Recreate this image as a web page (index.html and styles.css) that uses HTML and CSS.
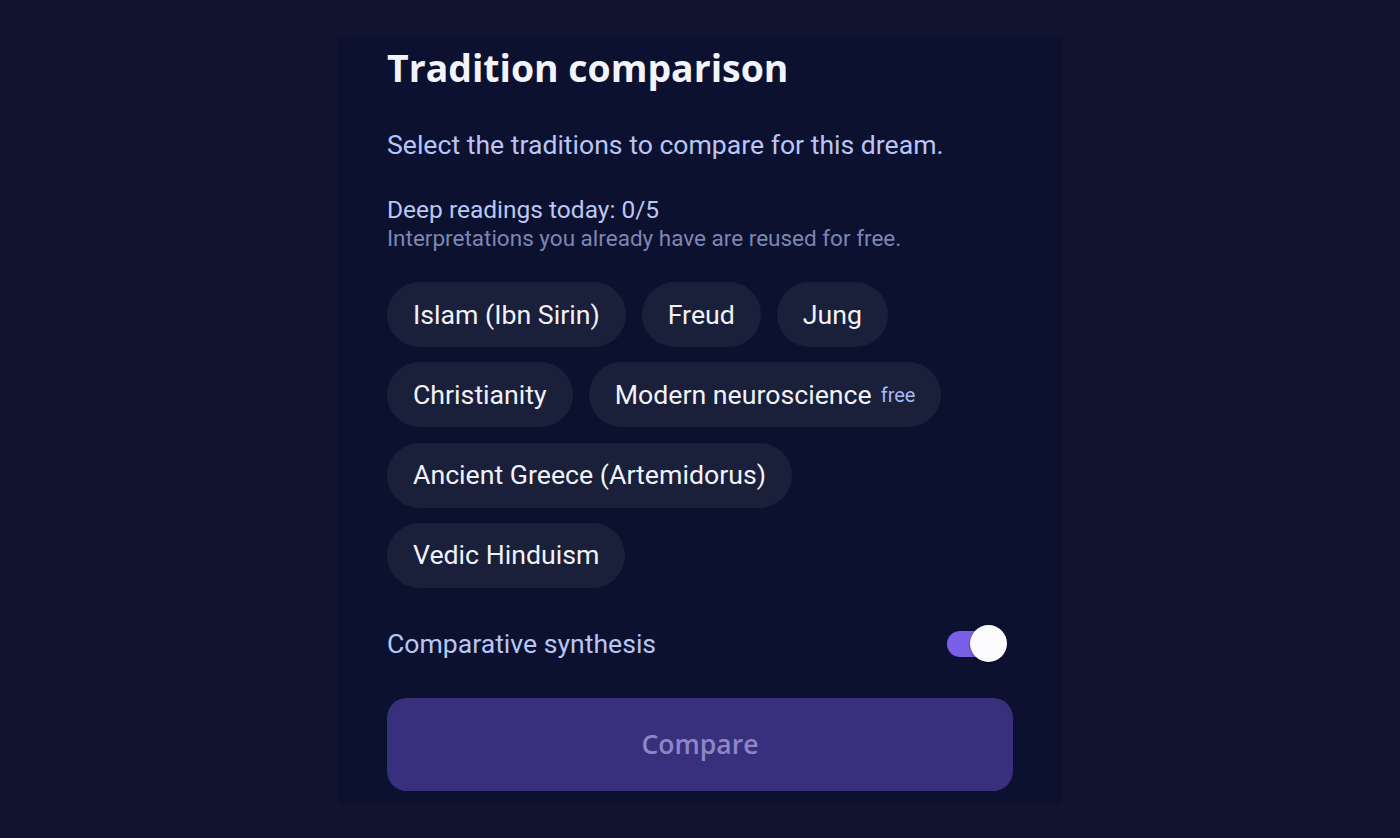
FILE: index.html
```html
<!DOCTYPE html>
<html lang="en">
<head>
<meta charset="utf-8">
<title>Tradition comparison</title>
<link rel="stylesheet" href="styles.css">
</head>
<body>
<main class="page">
  <section class="panel">
    <h1 class="title">Tradition comparison</h1>
    <p class="lead">Select the traditions to compare for this dream.</p>
    <div class="quota">
      <div class="quota-main">Deep readings today: 0/5</div>
      <div class="quota-note">Interpretations you already have are reused for free.</div>
    </div>
    <div class="chips">
      <button class="chip">Islam (Ibn Sirin)</button>
      <button class="chip">Freud</button>
      <button class="chip">Jung</button>
      <button class="chip">Christianity</button>
      <button class="chip">Modern neuroscience <span class="tag">free</span></button>
      <button class="chip">Ancient Greece (Artemidorus)</button>
      <button class="chip">Vedic Hinduism</button>
    </div>
    <div class="synth">
      <span class="synth-label">Comparative synthesis</span>
      <span class="toggle"><span class="knob"></span></span>
    </div>
    <button class="cta">Compare</button>
  </section>
</main>
</body>
</html>
```
FILE: styles.css
```css
html, body {
  margin: 0;
  padding: 0;
  background: #11132f;
  height: 100%;
}
body {
  font-family: Roboto, "Liberation Sans", sans-serif;
  overflow: hidden;
}
.page {
  display: flex;
  justify-content: center;
  padding-top: 36px;
}
.panel {
  width: 626px;
  padding: 0 49px 14px 49px;
  background: #0c1130;
  display: flex;
  flex-direction: column;
}
.title {
  margin: 8px 0 0 0;
  font-family: "Open Sans", sans-serif;
  font-weight: 700;
  font-size: 37.4px;
  line-height: 48px;
  color: #f2f3fb;
  letter-spacing: 0;
}
.lead {
  margin: 36px 0 0 0;
  font-size: 26.6px;
  line-height: 34px;
  color: #b9c5f4;
}
.quota {
  margin-top: 33px;
  display: flex;
  flex-direction: column;
}
.quota-main {
  font-size: 24.5px;
  line-height: 29px;
  color: #bcc7f3;
}
.quota-note {
  font-size: 22.5px;
  line-height: 28px;
  color: #7e86b3;
}
.chips {
  margin-top: 30px;
  display: flex;
  flex-wrap: wrap;
  gap: 15.33px 16px;
}
.chip {
  height: 65px;
  padding: 0 26px;
  border: none;
  border-radius: 33px;
  background: #1a1f3a;
  color: #f1f2f9;
  font-family: Roboto, sans-serif;
  font-size: 26.7px;
  display: flex;
  align-items: center;
}
.tag {
  margin-left: 9px;
  font-size: 20px;
  color: #a9b9f0;
}
.synth {
  margin-top: 36px;
  display: flex;
  justify-content: space-between;
  align-items: center;
  height: 40px;
}
.synth-label {
  font-size: 26.6px;
  color: #b9c5f4;
}
.toggle {
  position: relative;
  width: 50px;
  height: 26px;
  margin-right: 16px;
  border-radius: 13px;
  background: #7a60e6;
}
.knob {
  position: absolute;
  top: -5.5px;
  right: -10px;
  width: 37px;
  height: 37px;
  border-radius: 50%;
  background: #fbfbfd;
  box-shadow: 0 1px 3px rgba(0,0,0,0.4);
}
.cta {
  margin-top: 34px;
  height: 93px;
  border: none;
  border-radius: 20px;
  background: #39307d;
  color: #8d86c9;
  font-family: "Open Sans", sans-serif;
  font-weight: 600;
  font-size: 26.5px;
}
```
